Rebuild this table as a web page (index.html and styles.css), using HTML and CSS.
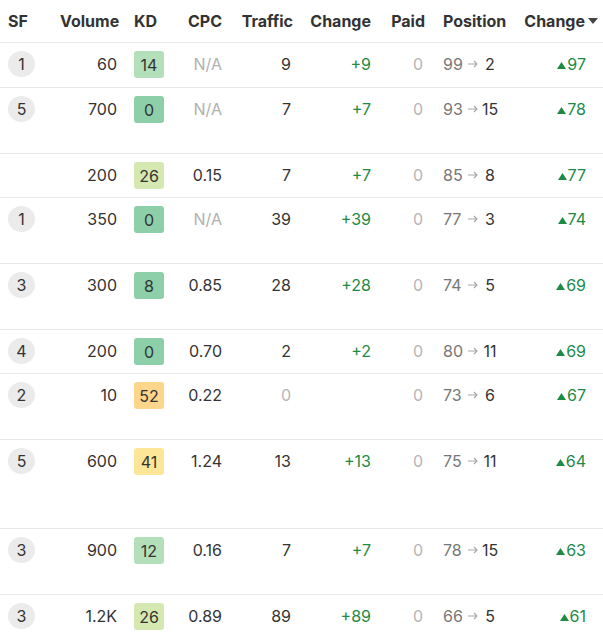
FILE: index.html
```html
<!DOCTYPE html>
<html>
<head>
<meta charset="utf-8">
<link rel="stylesheet" href="styles.css">
</head>
<body>
<div class="table">
  <div class="row head">
    <div class="c sf">SF</div>
    <div class="c r vol-h">Volume</div>
    <div class="c kd">KD</div>
    <div class="c r">CPC</div>
    <div class="c r traffic-h">Traffic</div>
    <div class="c r">Change</div>
    <div class="c r paid-h">Paid</div>
    <div class="c pos">Position</div>
    <div class="c sort"><span>Change</span><svg class="caret" width="10" height="6" viewBox="0 0 10 6"><path d="M0 0H10L5 6Z" fill="#444"/></svg></div>
  </div>

  <div class="row h45">
    <div class="c sf"><span class="circ">1</span></div>
    <div class="c r">60</div>
    <div class="c kd"><span class="badge k-lg">14</span></div>
    <div class="c r muted">N/A</div>
    <div class="c r">9</div>
    <div class="c r green">+9</div>
    <div class="c r faint">0</div>
    <div class="c pos"><span class="old">99</span><svg class="arr" width="11" height="8" viewBox="0 0 11 8"><path d="M0 4H9M6 1L9 4L6 7" stroke="#aaa" stroke-width="1.2" fill="none"/></svg><span class="new">2</span></div>
    <div class="c r green delta"><svg class="up" width="9" height="7" viewBox="0 0 9 7"><path d="M0 7H9L4.5 0Z" fill="#1d8a45"/></svg>97</div>
  </div>

  <div class="row h66">
    <div class="c sf"><span class="circ">5</span></div>
    <div class="c r">700</div>
    <div class="c kd"><span class="badge k-g">0</span></div>
    <div class="c r muted">N/A</div>
    <div class="c r">7</div>
    <div class="c r green">+7</div>
    <div class="c r faint">0</div>
    <div class="c pos"><span class="old">93</span><svg class="arr" width="11" height="8" viewBox="0 0 11 8"><path d="M0 4H9M6 1L9 4L6 7" stroke="#aaa" stroke-width="1.2" fill="none"/></svg><span class="new">15</span></div>
    <div class="c r green delta"><svg class="up" width="9" height="7" viewBox="0 0 9 7"><path d="M0 7H9L4.5 0Z" fill="#1d8a45"/></svg>78</div>
  </div>

  <div class="row h44">
    <div class="c sf"></div>
    <div class="c r">200</div>
    <div class="c kd"><span class="badge k-yg">26</span></div>
    <div class="c r">0.15</div>
    <div class="c r">7</div>
    <div class="c r green">+7</div>
    <div class="c r faint">0</div>
    <div class="c pos"><span class="old">85</span><svg class="arr" width="11" height="8" viewBox="0 0 11 8"><path d="M0 4H9M6 1L9 4L6 7" stroke="#aaa" stroke-width="1.2" fill="none"/></svg><span class="new">8</span></div>
    <div class="c r green delta"><svg class="up" width="9" height="7" viewBox="0 0 9 7"><path d="M0 7H9L4.5 0Z" fill="#1d8a45"/></svg>77</div>
  </div>

  <div class="row h66">
    <div class="c sf"><span class="circ">1</span></div>
    <div class="c r">350</div>
    <div class="c kd"><span class="badge k-g">0</span></div>
    <div class="c r muted">N/A</div>
    <div class="c r">39</div>
    <div class="c r green">+39</div>
    <div class="c r faint">0</div>
    <div class="c pos"><span class="old">77</span><svg class="arr" width="11" height="8" viewBox="0 0 11 8"><path d="M0 4H9M6 1L9 4L6 7" stroke="#aaa" stroke-width="1.2" fill="none"/></svg><span class="new">3</span></div>
    <div class="c r green delta"><svg class="up" width="9" height="7" viewBox="0 0 9 7"><path d="M0 7H9L4.5 0Z" fill="#1d8a45"/></svg>74</div>
  </div>

  <div class="row h66">
    <div class="c sf"><span class="circ">3</span></div>
    <div class="c r">300</div>
    <div class="c kd"><span class="badge k-g">8</span></div>
    <div class="c r">0.85</div>
    <div class="c r">28</div>
    <div class="c r green">+28</div>
    <div class="c r faint">0</div>
    <div class="c pos"><span class="old">74</span><svg class="arr" width="11" height="8" viewBox="0 0 11 8"><path d="M0 4H9M6 1L9 4L6 7" stroke="#aaa" stroke-width="1.2" fill="none"/></svg><span class="new">5</span></div>
    <div class="c r green delta"><svg class="up" width="9" height="7" viewBox="0 0 9 7"><path d="M0 7H9L4.5 0Z" fill="#1d8a45"/></svg>69</div>
  </div>

  <div class="row h44">
    <div class="c sf"><span class="circ">4</span></div>
    <div class="c r">200</div>
    <div class="c kd"><span class="badge k-g">0</span></div>
    <div class="c r">0.70</div>
    <div class="c r">2</div>
    <div class="c r green">+2</div>
    <div class="c r faint">0</div>
    <div class="c pos"><span class="old">80</span><svg class="arr" width="11" height="8" viewBox="0 0 11 8"><path d="M0 4H9M6 1L9 4L6 7" stroke="#aaa" stroke-width="1.2" fill="none"/></svg><span class="new">11</span></div>
    <div class="c r green delta"><svg class="up" width="9" height="7" viewBox="0 0 9 7"><path d="M0 7H9L4.5 0Z" fill="#1d8a45"/></svg>69</div>
  </div>

  <div class="row h66">
    <div class="c sf"><span class="circ">2</span></div>
    <div class="c r">10</div>
    <div class="c kd"><span class="badge k-o">52</span></div>
    <div class="c r">0.22</div>
    <div class="c r faint">0</div>
    <div class="c r green"></div>
    <div class="c r faint">0</div>
    <div class="c pos"><span class="old">73</span><svg class="arr" width="11" height="8" viewBox="0 0 11 8"><path d="M0 4H9M6 1L9 4L6 7" stroke="#aaa" stroke-width="1.2" fill="none"/></svg><span class="new">6</span></div>
    <div class="c r green delta"><svg class="up" width="9" height="7" viewBox="0 0 9 7"><path d="M0 7H9L4.5 0Z" fill="#1d8a45"/></svg>67</div>
  </div>

  <div class="row h89">
    <div class="c sf"><span class="circ">5</span></div>
    <div class="c r">600</div>
    <div class="c kd"><span class="badge k-y">41</span></div>
    <div class="c r">1.24</div>
    <div class="c r">13</div>
    <div class="c r green">+13</div>
    <div class="c r faint">0</div>
    <div class="c pos"><span class="old">75</span><svg class="arr" width="11" height="8" viewBox="0 0 11 8"><path d="M0 4H9M6 1L9 4L6 7" stroke="#aaa" stroke-width="1.2" fill="none"/></svg><span class="new">11</span></div>
    <div class="c r green delta"><svg class="up" width="9" height="7" viewBox="0 0 9 7"><path d="M0 7H9L4.5 0Z" fill="#1d8a45"/></svg>64</div>
  </div>

  <div class="row h66">
    <div class="c sf"><span class="circ">3</span></div>
    <div class="c r">900</div>
    <div class="c kd"><span class="badge k-lg">12</span></div>
    <div class="c r">0.16</div>
    <div class="c r">7</div>
    <div class="c r green">+7</div>
    <div class="c r faint">0</div>
    <div class="c pos"><span class="old">78</span><svg class="arr" width="11" height="8" viewBox="0 0 11 8"><path d="M0 4H9M6 1L9 4L6 7" stroke="#aaa" stroke-width="1.2" fill="none"/></svg><span class="new">15</span></div>
    <div class="c r green delta"><svg class="up" width="9" height="7" viewBox="0 0 9 7"><path d="M0 7H9L4.5 0Z" fill="#1d8a45"/></svg>63</div>
  </div>

  <div class="row h66">
    <div class="c sf"><span class="circ">3</span></div>
    <div class="c r">1.2K</div>
    <div class="c kd"><span class="badge k-yg">26</span></div>
    <div class="c r">0.89</div>
    <div class="c r">89</div>
    <div class="c r green">+89</div>
    <div class="c r faint">0</div>
    <div class="c pos"><span class="old">66</span><svg class="arr" width="11" height="8" viewBox="0 0 11 8"><path d="M0 4H9M6 1L9 4L6 7" stroke="#aaa" stroke-width="1.2" fill="none"/></svg><span class="new">5</span></div>
    <div class="c r green delta"><svg class="up" width="9" height="7" viewBox="0 0 9 7"><path d="M0 7H9L4.5 0Z" fill="#1d8a45"/></svg>61</div>
  </div>
</div>
</body>
</html>
```

FILE: styles.css
```css
html, body {
  margin: 0;
  padding: 0;
  background: #fff;
}
body {
  font-family: Inter, "Noto Sans", sans-serif;
  font-size: 16px;
  color: #333;
  overflow: hidden;
}
.table {
  width: 603px;
}
.row {
  display: grid;
  grid-template-columns: 60px 57px 58px 47px 69px 80px 52px 97px 83px;
  border-bottom: 1px solid #e8e8e8;
  box-sizing: border-box;
}
.head {
  height: 43px;
  font-weight: 700;
  font-size: 16px;
  color: #333;
}
.head .c {
  padding-top: 0;
  line-height: 42px;
  height: 42px;
}
.h44 { height: 44px; }
.h45 { height: 45px; }
.h66 { height: 66px; }
.h89 { height: 89px; }
.c {
  padding-top: 8px;
  line-height: 26px;
  white-space: nowrap;
}
.r {
  text-align: right;
}
.sf {
  padding-left: 8px;
}
.kd {
  padding-left: 17px;
}
.head .vol-h {
  padding-right: 2px;
}
.head .traffic-h {
  margin-right: -2px;
}
.head .paid-h {
  margin-right: -2px;
}
.circ {
  display: inline-flex;
  align-items: center;
  justify-content: center;
  width: 27px;
  height: 26px;
  border-radius: 50%;
  background: #ebebeb;
  color: #333;
}
.badge {
  display: inline-flex;
  align-items: center;
  justify-content: center;
  width: 30px;
  height: 27px;
  border-radius: 3px;
  color: #333;
}
.k-lg { background: #b3dfbb; }
.k-g { background: #8ccfa8; }
.k-yg { background: #d5e8b1; }
.k-o { background: #fdd68b; }
.k-y { background: #fde698; }
.muted { color: #b0b0b0; }
.faint { color: #b5b5b5; }
.green { color: #1d8a45; }
.pos {
  padding-left: 20px;
  display: flex;
  align-items: flex-start;
}
.head .pos {
  display: block;
}
.old {
  color: #777;
  min-width: 24px;
}
.arr {
  margin-top: 9px;
  margin-left: 1px;
}
.new {
  width: 22px;
  text-align: center;
  color: #333;
}
.delta {
  padding-right: 17px;
}
.up {
  margin-right: 1px;
  vertical-align: 1px;
}
.sort {
  display: flex;
  justify-content: flex-end;
  align-items: center;
  padding-right: 5px;
}
.caret {
  margin-left: 3px;
}
```
